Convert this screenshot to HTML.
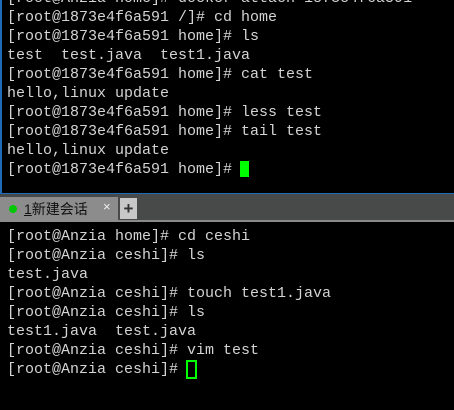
<!DOCTYPE html><html><head><style>
body{margin:0;width:454px;height:410px;background:#000;overflow:hidden;position:relative;font-family:"Liberation Mono",monospace;}
.t{position:absolute;left:7px;font-size:15px;line-height:19px;color:#d4d4d4;white-space:pre;}
</style></head><body>
<div style="position:absolute;left:0;top:0;width:2px;height:193px;background:#1e6bb8"></div>
<div class="t" style="top:-11px">[root@Anzia home]# docker attach 1873e4f6a591
[root@1873e4f6a591 /]# cd home
[root@1873e4f6a591 home]# ls
test  test.java  test1.java
[root@1873e4f6a591 home]# cat test
hello,linux update
[root@1873e4f6a591 home]# less test
[root@1873e4f6a591 home]# tail test
hello,linux update
[root@1873e4f6a591 home]# </div>
<div style="position:absolute;left:240px;top:161px;width:9px;height:16px;background:#00ff00"></div>
<div style="position:absolute;left:0;top:193px;width:454px;height:1px;background:#1e6bb8"></div>
<div style="position:absolute;left:0;top:194px;width:454px;height:26px;background:#474a48"></div>
<div style="position:absolute;left:0;top:220px;width:454px;height:2px;background:#8a8a8a"></div>
<div style="position:absolute;left:0;top:197px;width:118px;height:25px;background:#8c8c8c"></div>
<div style="position:absolute;left:9px;top:205px;width:8px;height:8px;border-radius:50%;background:#00c800"></div>
<div style="position:absolute;left:24px;top:199px;font-family:'Liberation Sans','Noto Sans CJK SC',sans-serif;font-size:14px;line-height:20px;color:#111"><u>1</u>新建会话</div>
<div style="position:absolute;left:103px;top:199px;font-family:'Liberation Sans',sans-serif;font-size:13px;color:#eee">×</div>
<div style="position:absolute;left:120px;top:198px;width:17px;height:21px;background:#c8c8c8;color:#333;font:bold 17px/21px 'Liberation Sans',sans-serif;text-align:center">+</div>
<div class="t" style="top:227px">[root@Anzia home]# cd ceshi
[root@Anzia ceshi]# ls
test.java
[root@Anzia ceshi]# touch test1.java
[root@Anzia ceshi]# ls
test1.java  test.java
[root@Anzia ceshi]# vim test
[root@Anzia ceshi]# </div>
<div style="position:absolute;left:186px;top:360px;width:7px;height:15px;border:2px solid #00ff00"></div>
</body></html>
